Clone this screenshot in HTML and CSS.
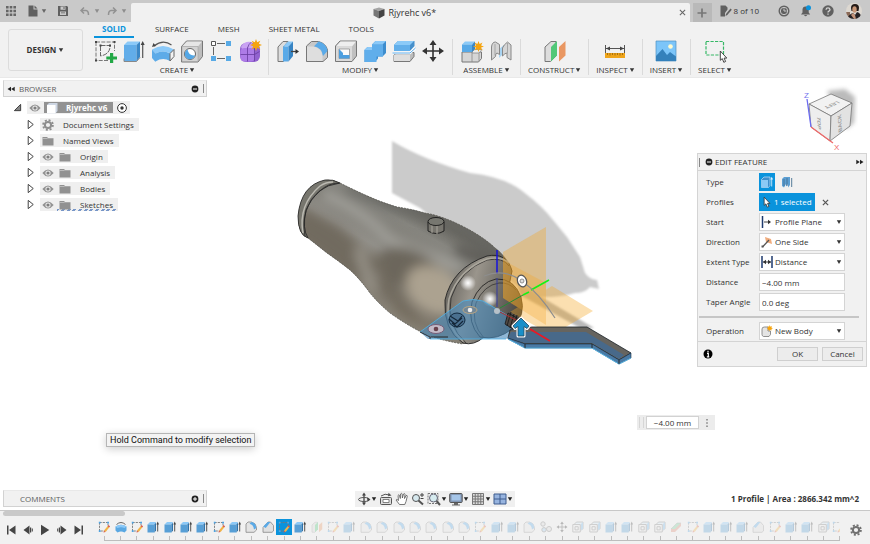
FILE: index.html
```html
<!DOCTYPE html>
<html lang="en">
<head>
<meta charset="utf-8">
<title>Rjyrehc v6*</title>
<link rel="stylesheet" href="styles.css">
</head>
<body>
<svg class="defs" aria-hidden="true">
  <symbol id="caret" viewBox="0 0 6 6"><path d="M.8 1.2h4.4L3 5z" fill="currentColor"/></symbol>
  <symbol id="apps" viewBox="0 0 12 12"><path d="M1 1h2.600v2.600H1zM4.700 1h2.600v2.600H4.700zM8.400 1H11v2.600H8.400zM1 4.700h2.600v2.600H1zM4.700 4.700h2.600v2.600H4.700zM8.400 4.700H11v2.600H8.400zM1 8.400h2.600V11H1zM4.700 8.400h2.600V11H4.700zM8.400 8.400H11V11H8.400z" fill="#666"/></symbol>
  <symbol id="file" viewBox="0 0 12 12"><path d="M1.500.5h5v4h4V11.500h-9z" fill="#606060"/><path d="M7.500.5l3 3h-3z" fill="#606060"/></symbol>
  <symbol id="save" viewBox="0 0 12 12"><path d="M1 1h9l1 1v9H1z" fill="#606060"/><path d="M3.500 1.500h5v3.200h-5zM3 6.500h6V10H3z" fill="#c9c9c9"/><path d="M6.500 2h1v2h-1zM4 7.500h4v.8H4z" fill="#606060"/></symbol>
  <symbol id="undo" viewBox="0 0 12 12"><path d="M5 2.500L2 5.500l3 3M2.300 5.500H7q2.500.2 2.500 4.500" fill="none" stroke="#929292" stroke-width="1.500"/></symbol>
  <symbol id="cubegray" viewBox="0 0 12 12"><path d="M.5 2L6 .5l5.500 1.500L6 4z" fill="#a5a5a5"/><path d="M.5 2L6 4v7.500l-5.500-3z" fill="#777"/><path d="M6 4l5.500-2v6.500L6 11.500z" fill="#444"/></symbol>
  <symbol id="job" viewBox="0 0 12 12"><path d="M.5.5h5l2 2v2L5 8v3.500H.500z" fill="#606060"/><path d="M6 9l4.500-5.500 1.300 1.200L7.300 10 5.500 11z" fill="#606060"/></symbol>
  <symbol id="clock" viewBox="0 0 12 12"><circle cx="6" cy="6" r="5.500" fill="#606060"/><circle cx="6" cy="6" r="3.700" fill="none" stroke="#c9c9c9"/><path d="M6 3.500V6h2.500" fill="none" stroke="#c9c9c9"/></symbol>
  <symbol id="bell" viewBox="0 0 12 12"><path d="M1 9.500l1.500-2V4.500Q2.700 1.500 5.500 1.500T8.700 4.500v3l1.500 2zM4 10h3.200Q5.600 12.500 4 10z" fill="#606060"/><circle cx="8.500" cy="2.800" r="2.500" fill="#0a93dc"/></symbol>
  <symbol id="help" viewBox="0 0 12 12"><circle cx="6" cy="6" r="5.700" fill="#606060"/><path d="M4 4.700Q4.200 2.800 6 2.800T8 4.500Q8 5.500 6.900 6.100 6 6.500 6 7.500M6 8.500v1.300" fill="none" stroke="#d5d5d5" stroke-width="1.300"/></symbol>

  <symbol id="sketch" viewBox="0 0 24 24"><path d="M3 3h18.500v9M3 3v18.500h12" fill="none" stroke="#777" stroke-dasharray="4 1.300"/><path d="M7.500 6.500h9.500v2q-1 7-9.500 8.500z" fill="none" stroke="#666" stroke-dasharray="5 1"/><path d="M2 2h2v2H2zM20.500 2h2v2h-2zM2 20.500h2v2H2zM16 5.500h2v2h-2zM6.500 5.500h2v2h-2z" fill="#444"/><path d="M17 14h3.200v3.400H24v3h-3.800V24H17v-3.600h-3.700v-3H17z" fill="#22a846"/></symbol>
  <symbol id="extrude" viewBox="0 0 24 24"><path d="M2 6l3.500-3.500H18L14.500 6z" fill="#8bc9f8"/><path d="M2 6h12.500v16.500H2z" fill="#62ade9"/><path d="M14.500 6L18 2.500V18l-3.500 4.500z" fill="#3b87c6"/><path d="M2 19.500V22.500h12.500L18 18.500" fill="none" stroke="#888"/><path d="M20.700 19V5" stroke="#555" stroke-width="1.200"/><path d="M20.700 2l2 4h-4z" fill="#444"/></symbol>
  <symbol id="revolve" viewBox="0 0 24 24"><path d="M3 7Q12 0 20.500 6" fill="none" stroke="#555" stroke-width="1.200"/><path d="M1 8l1.500-4 2.500 3z" fill="#444"/><path d="M1 10.500q11-7 22 0l-3.500 4q-7.500-4-15 0z" fill="#8bc9f8"/><path d="M1 10.500l3.500 4v8.500L1 19zM4.500 14.500q7.500-4 14.500 0v7.500q-7-4-14.500.5z" fill="#5dabe8"/><path d="M19 14.500l4-4v7l-4 4.500z" fill="#f3f3f3" stroke="#666"/></symbol>
  <symbol id="hole" viewBox="0 0 24 24"><path d="M1.500 7.500l5-5.500h16v15.500l-4.500 5.500H1.500z" fill="#bdbdbd" stroke="#777"/><path d="M2 7.500l5-5h15l-4 5z" fill="#e6e6e6"/><path d="M2 7.500h16v15H2z" fill="#d3d3d3" stroke="#999" stroke-width=".5"/><circle cx="10" cy="15" r="5.500" fill="#fff" stroke="#666"/><path d="M7.500 10.500a5.200 5.200 0 1 0 7.500 5.800q-6 1-7.500-5.800z" fill="#53a7e6"/></symbol>
  <symbol id="pattern" viewBox="0 0 24 24"><path d="M8 4.500h8M4.500 8v8M8 19.500h8" stroke="#666"/><path d="M2.500 2.500h4v4h-4z" fill="#fff" stroke="#555"/><path d="M17 2h5v5h-5zM17 17h5v5h-5zM2 17h5v5H2z" fill="#58aae6"/></symbol>
  <symbol id="form" viewBox="0 0 24 24"><rect x="2" y="4" width="20" height="19" rx="6" fill="#9262cf"/><path d="M3 8q3-6 10-5l4 5-3 2H4z" fill="#c9a2f3"/><rect x="2.500" y="9" width="14" height="13.500" rx="4" fill="#ad7be7"/><path d="M9.500 8.500v14M2.500 15.500h14l5-3M16.500 9v13M9.500 9q1-4 4-6" stroke="#673b9e" fill="none" stroke-width=".8"/><use href="#star" x="12" y="0" width="12" height="12"/></symbol>
  <symbol id="star" viewBox="0 0 12 12"><path d="M6 0l1.200 3.200L10.300 1.700 8.800 4.800 12 6 8.800 7.200l1.500 3.100-3.100-1.500L6 12 4.800 8.800 1.700 10.300 3.200 7.200 0 6l3.200-1.200L1.700 1.700l3.100 1.500z" fill="#f5a40f"/></symbol>
  <symbol id="press" viewBox="0 0 24 24"><path d="M2 8l5-5.500h5L7.500 8v14.500H2z" fill="#ddd" stroke="#777"/><path d="M7 7.500l5-5h5l-4.500 5z" fill="#8bc9f8"/><path d="M7 7.500h5.500v15H7z" fill="#5aaae8"/><path d="M12.500 7.500l4.500-5v14.500l-4.500 5.500z" fill="#3684c4"/><path d="M15 12.500h5" stroke="#444" stroke-width="1.300"/><path d="M19.500 10l3.500 2.500-3.500 2.500z" fill="#333"/></symbol>
  <symbol id="fillet" viewBox="0 0 24 24"><path d="M1.500 7l5-4.500h7q7.500 2 9 8.500v7.500L18 22.500H1.500z" fill="#c8c8c8" stroke="#777"/><path d="M2 7.500h5.500q9 .5 10 9.500v5H2z" fill="#dedede"/><path d="M9 7.300l4.500-4.800q8 2 9 9.500l-4.500 5q-1-8-9-9.700z" fill="#5aaae8"/></symbol>
  <symbol id="shell" viewBox="0 0 24 24"><path d="M1.500 7l4.500-5h16.500v15L18 22.500H1.500z" fill="#c0c0c0" stroke="#777"/><path d="M2 7.500l4.500-5H22l-4 5z" fill="#eee"/><path d="M2 7.500h16v14.500H2z" fill="#dadada"/><path d="M5 10h10.500v9.500H5z" fill="#fafafa" stroke="#888" stroke-width=".7"/><path d="M5 10l4 4v2h6.500v3.500H5z" fill="#4d9fdf"/></symbol>
  <symbol id="combine" viewBox="0 0 24 24"><path d="M1.500 11l3-3h4.500V5.500l3.500-3.500H23v12l-3.500 3.500H15v2l-3 3.500H1.500z" fill="#3d8dce"/><path d="M1.500 11l3-3h4.500V5.500h11v12h-6.500v5.500h-12z" fill="#60aeeb"/><path d="M9 5.500L12.500 2H23l-3.500 3.500zM1.500 11l3-3H9v3z" fill="#8bc9f8"/></symbol>
  <symbol id="split" viewBox="0 0 24 24"><path d="M2 6l4-4h16.500v5L18 12H2z" fill="#458fcb"/><path d="M2 6h16v6H2z" fill="#62afea"/><path d="M2 6l4-4h16l-4 4z" fill="#8bcaf8"/><path d="M2 16l3-2.500h17v4L18 22.500H2z" fill="#bcbcbc" stroke="#777"/><path d="M2 16h16v6H2z" fill="#dedede"/><path d="M.5 14h17.500l5.500-5" fill="none" stroke="#fff" stroke-width="2.600"/><path d="M.5 14h17.500l5.500-5" fill="none" stroke="#5aaae8" stroke-width="1"/></symbol>
  <symbol id="move" viewBox="0 0 24 24"><path d="M12 4v16M4 12h16" stroke="#333" stroke-width="1.600"/><path d="M12 1l3.500 5h-7zM12 23l3.500-5h-7zM1 12l5-3.500v7zM23 12l-5-3.500v7z" fill="#333"/></symbol>
  <symbol id="assemble" viewBox="0 0 24 24"><path d="M2 13h19.500v6.500L18.500 23H2z" fill="#d6d6d6" stroke="#777"/><path d="M12 13l2.500-2.500h7.500L19 14h-7zM12 13v10M19 14v8" fill="#eee" stroke="#888" stroke-width=".8"/><path d="M2 5.500l3-3h10L12 5.500z" fill="#8bcaf8"/><path d="M2 5.500h10V13H2z" fill="#57a9e7"/><path d="M12 5.500l3-3V10l-3 3z" fill="#3b87c6"/><use href="#star" x="13" y="2" width="11" height="11"/></symbol>
  <symbol id="joint" viewBox="0 0 24 24"><path d="M10 10l5-4v8l-5 5z" fill="#a9d4f2"/><path d="M2.500 8q.5-5 4-5l4 2.500v10L8 14q-1.500 0-1.500 3.500L2.500 21z" fill="#d5d5d5" stroke="#888"/><path d="M6 5v11.500" stroke="#999" stroke-width=".8"/><path d="M13.500 9q1-3 5-6l3.500 3v15l-4-2.500V14q-2 0-4.500 3z" fill="#d5d5d5" stroke="#888"/><path d="M18.500 4v10" stroke="#999" stroke-width=".8"/></symbol>
  <symbol id="plane" viewBox="0 0 24 24"><path d="M2 8l6-5.500h5V17l-5.500 5.500H2z" fill="#ddd" stroke="#777"/><path d="M8 8l6-6v14.500l-6 6z" fill="#50c878"/><path d="M16 8l6.500-6v14.500l-6.500 6z" fill="#e99762"/></symbol>
  <symbol id="measure" viewBox="0 0 24 24"><path d="M2.500 6v8M21.500 6v8M3 9.500h18" stroke="#555"/><path d="M3 9.500l4-2v4zM21 9.500l-4-2v4z" fill="#444"/><path d="M2 14h20v5H2z" fill="#efa51b"/><path d="M4.500 14v2M7 14v2.500M9.500 14v2M12 14v2.500M14.500 14v2M17 14v2.500M19.500 14v2" stroke="#93610a" stroke-width=".8"/></symbol>
  <symbol id="image" viewBox="0 0 24 24"><path d="M2 2h20v20H2z" fill="#7cc5f9" stroke="#4d8fc0" stroke-width=".7"/><path d="M2 17l6.500-7 4.500 6 3-3 6 4.500V22H2z" fill="#3481bb"/><circle cx="16.500" cy="7.500" r="2.300" fill="#fffbd0"/></symbol>
  <symbol id="select" viewBox="0 0 24 24"><path d="M3 2.500h17.500V16H3z" fill="none" stroke="#36b866" stroke-width="1.200" stroke-dasharray="3.200 1.300"/><use href="#pointer" x="16" y="11" width="9" height="13"/></symbol>
  <symbol id="pointer" viewBox="0 0 9 13"><path d="M1.300 1v9.300l2-1.700 1.500 3.700 1.800-.8-1.500-3.400h2.700z" fill="#fff" stroke="#333" stroke-width=".9"/></symbol>

  <symbol id="t-sketch" viewBox="0 0 12 12"><path d="M1.500 1.500h8.500v3M1.500 1.500v8.500h5" fill="none" stroke="#777" stroke-width=".9" stroke-dasharray="2.200 1"/><path d="M.8.8h1.800v1.800H.8zM9.200.8H11v1.800H9.200zM.8 9.200h1.800V11H.800z" fill="#4ea5e5"/><path d="M6 9.500L9.800 5l1.500 1.300L7.700 11z" fill="#f2b345"/><path d="M9.600 5.200l1-1.200 1.500 1.300-1 1.200zM6 9.500L5.500 11.500l2-.5z" fill="#d8574b"/></symbol>
  <symbol id="t-revolve" viewBox="0 0 12 12"><path d="M1.500 3.500Q6-.5 10.500 3.500" fill="none" stroke="#666"/><path d="M.5 5.500q5.500-3.500 11 0v4L9.500 11.500q-3.500-2-7 0L.5 9.500z" fill="#5aa8e2"/><path d="M.5 5.500q5.500-3.500 11 0l-2 1.500q-3.500-1.500-7 0z" fill="#8bc9f8"/></symbol>
  <symbol id="t-extrude" viewBox="0 0 12 12"><path d="M.5 3.500L3 1h6L7.500 3.500z" fill="#8bc9f8"/><path d="M.5 3.500h7v8h-7z" fill="#579fd6"/><path d="M7.500 3.500L9 1.500V9.500l-1.500 2z" fill="#2f75ad"/><path d="M10.700 10.500V2.500" stroke="#555"/><path d="M10.700.5L12 3.500H9.400z" fill="#444"/></symbol>
  <symbol id="t-selected" viewBox="0 0 12 12"><path d="M.5 3.500L3 1h6v8.500l-1.500 2h-7z" fill="#3e8fcc" stroke="#d9efff" stroke-width=".6"/><path d="M1 4h6v7H1z" fill="#8ccaf6"/><path d="M10.700 10.500V2.500" stroke="#e0f1ff" stroke-width=".8"/><path d="M10.700.8L12 3.500H9.400z" fill="#e0f1ff"/></symbol>
  <symbol id="t-fillet" viewBox="0 0 12 12"><path d="M1 3l2-2h3.500Q11 2 11.500 6.500V9L9 11.300H1z" fill="#e4e4e4" stroke="#888" stroke-width=".8"/><path d="M4.500 2.700L6.500 1q4.500 1 4.800 6L9 8.500q-.5-5-4.500-5.800z" fill="#5aaae8"/></symbol>
  <symbol id="t-chamfer" viewBox="0 0 12 12"><path d="M1 6.500L6 1h2.500l3 3.500V10l-1.500 1.300H1z" fill="#e0e0e0" stroke="#888" stroke-width=".8"/><path d="M1.300 5.500L5.700 1h2.800L3.700 7z" fill="#5aaae8"/></symbol>
  <symbol id="t-combine" viewBox="0 0 12 12"><path d="M2.500 3l2-2h6.500v6.500l-2 2" fill="#d9ecfa" stroke="#777" stroke-width=".9"/><path d="M.8 3.500h7.500V11H.8zM3 5.700h3.200v3.200H3z" fill="#eee" stroke="#777" stroke-width=".9"/><path d="M9 3l2-2v6.500L9 9.500z" fill="#76b9ea"/></symbol>
  <symbol id="t-joint" viewBox="0 0 12 12"><circle cx="3" cy="3" r="2.200" fill="#ddd" stroke="#777"/><circle cx="4" cy="8.800" r="2.200" fill="#a7d3f3" stroke="#777"/><circle cx="9" cy="8" r="2.500" fill="#ddd" stroke="#777"/></symbol>
  <symbol id="t-split" viewBox="0 0 12 12"><path d="M1 8l6-6h4L5 9z" fill="#78cf99" stroke="#777" stroke-width=".5"/><path d="M1 8h4l6-6v3l-6 6H1z" fill="#e08b73"/></symbol>
  <symbol id="gear" viewBox="0 0 12 12"><circle cx="6" cy="6" r="3.100" fill="none" stroke="currentColor" stroke-width="2"/><circle cx="6" cy="6" r="4.900" fill="none" stroke="currentColor" stroke-width="1.800" stroke-dasharray="2 1.850"/></symbol>

  <symbol id="eye" viewBox="0 0 12 12"><path d="M.3 6Q6-1 11.700 6 6 13 .3 6z" fill="#929292"/><circle cx="6" cy="6" r="2.600" fill="#e8e8e8"/><circle cx="6" cy="6" r="1.600" fill="#808080"/></symbol>
  <symbol id="folder" viewBox="0 0 12 12"><path d="M.5 2h5v1.200h6V10.500H.500z" fill="#919191"/><path d="M.5 3.500h5" stroke="#ccc" stroke-width=".7"/></symbol>
  <symbol id="closed" viewBox="0 0 8 12"><path d="M1.500 1.500v9L7 6z" fill="#fff" stroke="#333"/></symbol>
  <symbol id="open" viewBox="0 0 10 10"><path d="M8.500 1.500v7h-7z" fill="#888" stroke="#333"/></symbol>
  <symbol id="minus" viewBox="0 0 8 8"><circle cx="4" cy="4" r="3.400" fill="#222"/><path d="M2 4h4" stroke="#fff"/></symbol>
  <symbol id="plus" viewBox="0 0 8 8"><circle cx="4" cy="4" r="3.400" fill="#222"/><path d="M2 4h4M4 2v4" stroke="#fff"/></symbol>
  <symbol id="rewind" viewBox="0 0 8 6"><path d="M4 .8v4.400L.5 3zM7.700.8v4.400L4.200 3z" fill="#222"/></symbol>
  <symbol id="first" viewBox="0 0 12 12"><path d="M2 1.500h1.500v9H2zM10.500 1.500v9L4 6z" fill="#444"/></symbol>
  <symbol id="prev" viewBox="0 0 12 12"><path d="M7.500 1.500v9L1.500 6z" fill="#444"/><path d="M8 3.500h1.200v5H8zM9.800 4.500h1v3h-1z" fill="#444"/></symbol>
  <symbol id="play" viewBox="0 0 12 12"><path d="M2 .8v10.400L10.300 6z" fill="#444"/></symbol>

  <symbol id="n-orbit" viewBox="0 0 14 14"><path d="M7 2v10" stroke="#444" stroke-width="1.300"/><path d="M7 .5l2 3H5zM7 13.500l2-3H5z" fill="#444"/><ellipse cx="7" cy="7.500" rx="5.500" ry="2" fill="none" stroke="#555"/><path d="M10 5.500l3.500 2-3 2z" fill="#444"/></symbol>
  <symbol id="n-look" viewBox="0 0 14 14"><rect x="1.500" y="5.500" width="11" height="7" rx="1" fill="#ddd" stroke="#555"/><path d="M4 7.500h6v3H4z" fill="#fff" stroke="#666" stroke-width=".8"/><path d="M2 4q4-3 8.500-1" fill="none" stroke="#555"/><path d="M9.500.8l3 2.700-3.500.8z" fill="#555"/></symbol>
  <symbol id="n-hand" viewBox="0 0 14 14"><path d="M4.500 12.500L1 8q.5-1.500 2.500.5L3 3.500q1-1.500 1.500 0l.8 3L5.500 2q1-1.500 1.600 0l.3 4L8.500 2q1.300-1 1.500.3L9.500 6.500l1.600-3q1.200-.5 1.200.7L11 9.500l-1.200 3z" fill="#fff" stroke="#555" stroke-width=".8"/></symbol>
  <symbol id="n-zoom" viewBox="0 0 14 14"><circle cx="5" cy="6" r="3.500" fill="#d6e8ee" stroke="#555"/><path d="M7.500 8.500L12 12.500" stroke="#555" stroke-width="2"/><path d="M11 1v4M9 3h4M9.500 6.500h3" stroke="#444"/></symbol>
  <symbol id="n-window" viewBox="0 0 14 14"><path d="M1 1.500h10v10H1z" fill="none" stroke="#777" stroke-dasharray="2 1"/><circle cx="6.500" cy="6" r="4" fill="#d6ebef" stroke="#667"/><path d="M9.500 9l3.500 4" stroke="#555" stroke-width="2"/></symbol>
  <symbol id="n-display" viewBox="0 0 14 14"><rect x=".7" y="1.500" width="12.500" height="9" rx="1" fill="#8196b3" stroke="#555"/><path d="M2.500 3h9v5.500h-9z" fill="#a5c5e8"/><path d="M5 11h4v1.500h2v1H3v-1h2z" fill="#666"/></symbol>
  <symbol id="n-grid" viewBox="0 0 14 14"><path d="M1.500 1.500h11v11h-11zM4.250 1.500v11M7 1.500v11M9.750 1.500v11M1.500 4.250h11M1.500 7h11M1.500 9.750h11" fill="#ddd" stroke="#777"/></symbol>
  <symbol id="n-views" viewBox="0 0 14 14"><path d="M1 2h12v10H1z" fill="#97b4df" stroke="#3e5c8e"/><path d="M7 2v10M1 7h12" stroke="#3e5c8e"/></symbol>
  <symbol id="s-start" viewBox="0 0 12 12"><path d="M1.500 0v12" stroke="#1e3a6d" stroke-width="1.500"/><path d="M3 6h6" stroke="#444"/><path d="M7 3.800L10 6 7 8.200z" fill="#333"/></symbol>
  <symbol id="s-side" viewBox="0 0 12 12"><path d="M4 1l6 2 1 5-6-2z" fill="#f0ac7d"/><path d="M1.500 11L8 4" stroke="#555" stroke-width="1.200"/><path d="M.5 9.500h2v2h-2z" fill="#555"/></symbol>
  <symbol id="s-dist" viewBox="0 0 12 12"><path d="M1 0v12M11 0v12" stroke="#1e3a6d" stroke-width="1.500"/><path d="M2 6h8" stroke="#333"/><path d="M2 6l3-2.200v4.400zM10 6L7 3.800v4.400z" fill="#333"/></symbol>
  <symbol id="s-body" viewBox="0 0 12 12"><path d="M1 4q0-2 2.500-2H7v4h2.500v3.500L8 11.500H2.500Q1 11 1 9.500z" fill="#e4e4e4" stroke="#777" stroke-width=".8"/><use href="#star" x="5.500" y="0" width="6.500" height="6.500"/></symbol>
</svg>

<header class="titlebar">
  <div class="quick">
    <button aria-label="Data panel"><svg><use href="#apps"/></svg></button>
    <button aria-label="File"><svg><use href="#file"/></svg><svg class="caret"><use href="#caret"/></svg></button>
    <button aria-label="Save"><svg><use href="#save"/></svg></button>
    <button class="dim" aria-label="Undo"><svg><use href="#undo"/></svg><svg class="caret"><use href="#caret"/></svg></button>
    <button class="dim" aria-label="Redo"><svg class="flip"><use href="#undo"/></svg><svg class="caret"><use href="#caret"/></svg></button>
  </div>
  <div class="doc-tab">
    <span class="doc-name"><svg><use href="#cubegray"/></svg>Rjyrehc v6*</span>
    <button class="close" aria-label="Close document"><svg viewBox="0 0 8 8"><path d="M1 1l6 6M7 1L1 7" stroke="#666" stroke-width="1.200"/></svg></button>
  </div>
  <button class="new-tab" aria-label="New design"><svg viewBox="0 0 10 10"><path d="M5 .5v9M.5 5h9" stroke="#777" stroke-width="1.700"/></svg></button>
  <div class="account">
    <button class="jobs"><svg><use href="#job"/></svg>8 of 10</button>
    <button aria-label="Job status"><svg><use href="#clock"/></svg></button>
    <button aria-label="Notifications"><svg><use href="#bell"/></svg></button>
    <button aria-label="Help"><svg><use href="#help"/></svg></button>
    <button aria-label="Profile"><svg class="avatar" viewBox="0 0 16 16"><clipPath id="round"><circle cx="8" cy="8" r="8"/></clipPath><g clip-path="url(#round)"><path d="M0 0h16v16H0z" fill="#ddd8d1"/><path d="M0 9h4v7H0z" fill="#8a6a58"/><path d="M5 5q0-4 4-4t4 4l-.5 3H5.500z" fill="#251b18"/><ellipse cx="8.500" cy="6.500" rx="2.200" ry="3.200" fill="#c89777"/><path d="M1 16q2-5 6-6l2 2 2-3q4 1 5 7z" fill="#242124"/><path d="M5 12l3 4h2l-1-4-2-2z" fill="#c4947a"/></g></svg></button>
  </div>
</header>

<section class="ribbon">
  <button class="workspace">DESIGN<svg class="caret"><use href="#caret"/></svg></button>
  <div class="ribbon-main">
    <nav class="tabs">
      <a class="active" href="#solid">SOLID</a><a href="#surface">SURFACE</a><a href="#mesh">MESH</a><a href="#sheet">SHEET METAL</a><a href="#tools">TOOLS</a>
    </nav>
    <div class="groups">
      <div class="group">
        <div class="tools"><button aria-label="Create Sketch"><svg><use href="#sketch"/></svg></button><button aria-label="Extrude"><svg><use href="#extrude"/></svg></button><button aria-label="Revolve"><svg><use href="#revolve"/></svg></button><button aria-label="Hole"><svg><use href="#hole"/></svg></button><button aria-label="Pattern"><svg><use href="#pattern"/></svg></button><button aria-label="Create Form"><svg><use href="#form"/></svg></button></div>
        <button class="menu">CREATE<svg class="caret"><use href="#caret"/></svg></button>
      </div>
      <div class="group">
        <div class="tools"><button aria-label="Press Pull"><svg><use href="#press"/></svg></button><button aria-label="Fillet"><svg><use href="#fillet"/></svg></button><button aria-label="Shell"><svg><use href="#shell"/></svg></button><button aria-label="Combine"><svg><use href="#combine"/></svg></button><button aria-label="Split Body"><svg><use href="#split"/></svg></button><button aria-label="Move"><svg><use href="#move"/></svg></button></div>
        <button class="menu">MODIFY<svg class="caret"><use href="#caret"/></svg></button>
      </div>
      <div class="group">
        <div class="tools"><button aria-label="New Component"><svg><use href="#assemble"/></svg></button><button aria-label="Joint"><svg><use href="#joint"/></svg></button></div>
        <button class="menu">ASSEMBLE<svg class="caret"><use href="#caret"/></svg></button>
      </div>
      <div class="group">
        <div class="tools"><button aria-label="Offset Plane"><svg><use href="#plane"/></svg></button></div>
        <button class="menu">CONSTRUCT<svg class="caret"><use href="#caret"/></svg></button>
      </div>
      <div class="group">
        <div class="tools"><button aria-label="Measure"><svg><use href="#measure"/></svg></button></div>
        <button class="menu">INSPECT<svg class="caret"><use href="#caret"/></svg></button>
      </div>
      <div class="group">
        <div class="tools"><button aria-label="Insert Image"><svg><use href="#image"/></svg></button></div>
        <button class="menu">INSERT<svg class="caret"><use href="#caret"/></svg></button>
      </div>
      <div class="group">
        <div class="tools"><button aria-label="Window Selection"><svg><use href="#select"/></svg></button></div>
        <button class="menu">SELECT<svg class="caret"><use href="#caret"/></svg></button>
      </div>
    </div>
  </div>
</section>

<main class="canvas">
  <svg class="scene" viewBox="290 130 350 250" role="img" aria-label="Bottle-shaped body with bracket">
    <defs>
      <linearGradient id="metal" gradientUnits="userSpaceOnUse" x1="410" y1="205" x2="355" y2="300">
        <stop offset="0" stop-color="#66655f"/><stop offset=".16" stop-color="#86857f"/><stop offset=".33" stop-color="#807e77"/><stop offset=".48" stop-color="#92908a"/><stop offset=".75" stop-color="#7f796e"/><stop offset="1" stop-color="#8b867b"/>
      </linearGradient>
      <linearGradient id="dome" gradientUnits="userSpaceOnUse" x1="448" y1="290" x2="522" y2="310">
        <stop offset="0" stop-color="#6d6a64"/><stop offset=".3" stop-color="#9a958c"/><stop offset=".6" stop-color="#76736c"/><stop offset="1" stop-color="#45433f"/>
      </linearGradient>
      <radialGradient id="glow"><stop offset="0" stop-color="#fff"/><stop offset=".35" stop-color="#fff" stop-opacity=".7"/><stop offset="1" stop-color="#fff" stop-opacity="0"/></radialGradient>
      <filter id="soft" x="-50%" y="-50%" width="200%" height="200%"><feGaussianBlur stdDeviation="6"/></filter>
      <filter id="edge"><feGaussianBlur stdDeviation=".8"/></filter>
      <clipPath id="bottle"><path d="M325 180q8-1 15 3 12 6 23 11 17 8 34 13 14 2 28 6 18 3 39 14 16 8 29 19 14 10 19 24l-30 60q-10 14-19 14-25-4-40-11-16-8-33-20-12-10-20-20-10-14-20-23-10-8-23-17l-19-15q-10-3-10-22 3-31 27-36z"/></clipPath>
    </defs>
    <path d="M392 141q32 19 78 32 37 4 56 21 16 12 27 26l14 17 13 20 5 16q5 7 12 7l2 9-9-2q-5 6-15 6-20 6-46 3l-109-88-28-15z" fill="#cbcbcb" filter="url(#edge)"/>
    <path d="M518 286l8 2 68 40-12 1-62-34z" fill="#b9b9b9" filter="url(#edge)"/>
    <g clip-path="url(#bottle)">
      <path d="M290 170h240v180H290z" fill="url(#metal)"/>
      <g filter="url(#soft)">
        <path d="M300 205l40 22 40 36-14 24-70-50z" fill="#716a5e"/>
        <path d="M322 194q42 18 68 46l72 28" fill="none" stroke="#a5a49f" stroke-width="9"/>
        <path d="M345 188q40 18 76 25l45 17 30 24" fill="none" stroke="#686863" stroke-width="8"/>
        <path d="M358 248l14 42" stroke="#9d998f" stroke-width="8"/>
        <ellipse cx="413" cy="272" rx="38" ry="21" transform="rotate(28 413 272)" fill="#6c665b"/>
        <path d="M382 262l6 30 30 28" fill="none" stroke="#6e675c" stroke-width="10"/>
        <ellipse cx="434" cy="290" rx="30" ry="22" transform="rotate(32 434 290)" fill="#aca290"/>
        <path d="M395 307q20 18 56 25" fill="none" stroke="#786f61" stroke-width="7"/>
        <path d="M455 250l35 10 10 15" fill="none" stroke="#5e5d59" stroke-width="14"/>
      </g>
    </g>
    <path d="M340 183q12 6 23 11 17 8 34 13 14 2 28 6 18 3 39 14 16 8 29 19M308 238q9 7 19 15 13 9 23 17 10 9 20 23 8 10 20 20 17 12 33 20 15 7 40 11" fill="none" stroke="#55544e" stroke-width=".8" stroke-dasharray="2 1"/>
    <path d="M308 238q-10-3-10-22 3-31 27-36 8-1 15 3-25 3-34 27-4 19 2 28z" fill="#77766e" stroke="#222" stroke-width=".8"/>
    <path d="M303 233q-5-28 17-47 6-4 13-4" fill="none" stroke="#bbb9b1" stroke-width="1.500"/>
    <path d="M305 236q-5-28 15-45 8-8 19-8" fill="none" stroke="#252525" stroke-width=".8"/>
    <path d="M463 343q-20-13-18-43 7-32 42-44 20-4 25 15-7 45-28 66-10 9-21 6z" fill="url(#dome)" stroke="#222" stroke-width=".9"/>
    <path d="M466 343q-20-18-15-45 9-28 36-38 16-3 22 6" fill="none" stroke="#2c2b29" stroke-width=".8"/>
    <path d="M463 341q-19-16-14-42 9-29 38-40 14-3 22 4" fill="none" stroke="#aaa69c" stroke-width="1.500"/>
    <circle cx="468" cy="283" r="8" fill="url(#glow)"/>
    <path d="M480 337q-13-14-8-35 8-20 24-23 18-1 25 18 5 18-8 31-15 13-33 9z" fill="url(#dome)" stroke="#252423" stroke-width=".9"/>
    <path d="M484 338q-14-15-8-35 8-18 23-20 10-1 17 7" fill="none" stroke="#363431" stroke-width=".8"/>
    <circle cx="490" cy="299" r="8" fill="url(#glow)"/>
    <path d="M428 222v9q8 5 16 0v-9z" fill="#77756e" stroke="#181818" stroke-width=".9"/><path d="M432 225v8M437 225v9" stroke="#a9a69c"/><ellipse cx="436" cy="221.500" rx="8" ry="4" fill="#777770" stroke="#181818" stroke-width=".9"/>
    <path d="M503 252l43-25v98l-43-27zM510 312l42-26 41 25-41 24z" fill="#f5a623" fill-opacity=".36"/>
    <path d="M503 260l43 23v42l-43-27z" fill="#f5a623" fill-opacity=".3"/>
    <path d="M420 332l43-31q10-3 20 0l49 28-7 15-17-6-2 1h-78z" fill="#4a8abb" fill-opacity=".62"/>
    <path d="M420 332l43-31q10-3 20 0l27 16M430 339h76" fill="none" stroke="#4eb3e8" stroke-width=".8"/>
    <path d="M508 338l2-8 22-3h55l44 26-12 7-27-16h-67z" fill="#66645f" stroke="#1b2227" stroke-width=".8"/>
    <path d="M508 338l3-6 21 0h54l38 23-5 4-27-16h-67z" fill="#48698a"/>
    <path d="M508 338l17 6h67l27 16 12-7v5l-12 6-27-16h-67l-17-9z" fill="#4a7aa5" stroke="#152b3f" stroke-width=".6"/>
    <path d="M508 339l17 9h67l27 16 12-6" fill="none" stroke="#58bff5" stroke-width=".9"/>
    <path d="M525 344v4M592 344v4M619 360v4M420 332l10 5h18M430 337v2" fill="none" stroke="#202020" stroke-width=".9"/>
    <ellipse cx="436" cy="329" rx="8" ry="4.500" fill="#c3bbc8" stroke="#755e79"/><circle cx="436" cy="329" r="2.300" fill="#68424d"/>
    <ellipse cx="470" cy="310" rx="7" ry="3.500" fill="#728797" stroke="#baa684"/><circle cx="470" cy="310" r="2.300" fill="#eee"/>
    <ellipse cx="457" cy="320" rx="8" ry="7" fill="#4a708f" stroke="#122a40"/><path d="M449 319l6 5 7-6M452 323l5 4 6-6M450 316l8 5 4-5" fill="none" stroke="#142739" stroke-width="1.100"/>
    <path d="M508 313l9 5-4 11-8-5zM511 312l-4 14M514 314l-4 14M517 315l-4 14" fill="#514a44" stroke="#171717" stroke-width=".8"/>
    <path d="M497 250v24" stroke="#1612dd" stroke-width="1.500"/><path d="M497 278v29" stroke="#343aa0" stroke-width="1"/>
    <path d="M500 308l23-13" stroke="#258a36"/><path d="M523 295l6-3M531 290l18-10" stroke="#12f316" stroke-width="1.600"/>
    <path d="M500 312l18 9" stroke="#b12b2b"/><path d="M530 329l20 12" stroke="#ee1623" stroke-width="1.500"/>
    <path d="M484 276q21-8 38 5 18 13 33 37" fill="none" stroke="#8d8d8d" stroke-width="1.200"/>
    <ellipse cx="522" cy="281" rx="4.500" ry="6" transform="rotate(-20 522 281)" fill="#fff" stroke="#555" stroke-width="1.300"/><circle cx="522" cy="281" r="2" fill="#ddd" stroke="#777" stroke-width=".8"/>
    <circle cx="497" cy="311" r="3" fill="#c8ccd0" fill-opacity=".85"/>
    <path d="M521 318l8 8-2 2.500-3-2V336h-6v-9.500l-3 2-2-2.500z" fill="#138cc4" stroke="#fff" stroke-width="3" stroke-linejoin="round"/><path d="M521 318l8 8-2 2.500-3-2V336h-6v-9.500l-3 2-2-2.500z" fill="#198fc9" stroke="#24465a" stroke-width=".8"/>
  </svg>

  <div class="workarea">
    <aside class="browser">
      <div class="bar"><button aria-label="Collapse browser"><svg class="rewind"><use href="#rewind"/></svg></button><h2>BROWSER</h2><button aria-label="Hide browser"><svg><use href="#minus"/></svg></button><i class="grip"></i></div>
      <ul class="tree">
        <li class="root"><svg class="twist"><use href="#open"/></svg><span class="node"><svg><use href="#eye"/></svg><span class="chip"><svg viewBox="0 0 12 12"><path d="M1 3l2-2h8.500v8l-2 2.500H1z" fill="#cdd6e3"/><path d="M1 3h8.500v8.500H1z" fill="#fff"/></svg>Rjyrehc v6</span><svg viewBox="0 0 12 12"><circle cx="6" cy="6" r="4.400" fill="#fff" stroke="#333"/><circle cx="6" cy="6" r="1.700" fill="#333"/></svg></span></li>
        <li><svg class="twist"><use href="#closed"/></svg><span class="node"><svg class="gray"><use href="#gear"/></svg>Document Settings</span></li>
        <li><svg class="twist"><use href="#closed"/></svg><span class="node"><svg><use href="#folder"/></svg>Named Views</span></li>
        <li><svg class="twist"><use href="#closed"/></svg><span class="node"><svg><use href="#eye"/></svg><svg><use href="#folder"/></svg>Origin</span></li>
        <li><svg class="twist"><use href="#closed"/></svg><span class="node"><svg><use href="#eye"/></svg><svg><use href="#folder"/></svg>Analysis</span></li>
        <li><svg class="twist"><use href="#closed"/></svg><span class="node"><svg><use href="#eye"/></svg><svg><use href="#folder"/></svg>Bodies</span></li>
        <li><svg class="twist"><use href="#closed"/></svg><span class="node hatched"><svg><use href="#eye"/></svg><svg><use href="#folder"/></svg>Sketches</span></li>
      </ul>
    </aside>

    <div class="right">
      <svg class="viewcube" viewBox="800 84 68 70" role="img" aria-label="View cube">
        <defs><filter id="cubeshade"><feGaussianBlur stdDeviation="2"/></filter></defs>
        <path d="M828 92l18-2 10 8-1 26-8 6z" fill="#bbb" filter="url(#cubeshade)"/>
        <path d="M810 105l22-10 21 9-21 13z" fill="#f2f2f2" stroke="#777" stroke-width=".8"/><path d="M810 105l22 12-1 25-19-14z" fill="#eee" stroke="#777" stroke-width=".8"/><path d="M832 117l21-13-2 23-20 15z" fill="#e2e2e2" stroke="#777" stroke-width=".8"/>
        <path d="M808 100l4 28" stroke="#6b6bf0" stroke-width="1.300"/><path d="M812 128l22 16" stroke="#f06868" stroke-width="1.300"/>
        <text class="cube-z" x="805" y="99">Z</text><text class="cube-x" x="835" y="151">X</text>
        <text class="cube-face" transform="matrix(-.9 .4 -.8 -.45 838 102)">LEFT</text>
        <text class="cube-face" transform="matrix(.05 1 -.8 -.5 818 117)">TOP</text>
        <text class="cube-face" transform="matrix(-.05 -1 .8 -.5 843 132)">BACK</text>
      </svg>

      <form class="feature">
        <div class="feature-head"><i class="grip"></i><svg><use href="#minus"/></svg><h2>EDIT FEATURE</h2><button type="button" aria-label="Dock panel"><svg class="rewind flip"><use href="#rewind"/></svg></button></div>
        <div class="fields">
          <span>Type</span>
          <div class="cell types"><button type="button" class="on" aria-label="Extrude"><svg><use href="#t-selected"/></svg></button><button type="button" aria-label="Thin Extrude"><svg viewBox="0 0 12 12"><path d="M1 3l2-2h6v8l-2 2.500V8L5 10.500V8l-2 3.500L1 10z" fill="#5c9fd3"/><path d="M3 3v7M6 2v8M10.700 2v9" stroke="#456f91" stroke-width=".9"/></svg></button></div>
          <span>Profiles</span>
          <div class="cell"><button type="button" class="picked"><svg class="pointer"><use href="#pointer"/></svg>1 selected</button><button type="button" class="clear" aria-label="Clear selection"><svg viewBox="0 0 8 8"><path d="M1 1l6 6M7 1L1 7" stroke="#555" stroke-width="1.400"/></svg></button></div>
          <label for="start">Start</label>
          <div class="cell combo"><svg><use href="#s-start"/></svg><select id="start"><option>Profile Plane</option></select><svg class="caret"><use href="#caret"/></svg></div>
          <label for="direction">Direction</label>
          <div class="cell combo"><svg><use href="#s-side"/></svg><select id="direction"><option>One Side</option></select><svg class="caret"><use href="#caret"/></svg></div>
          <label for="extent">Extent Type</label>
          <div class="cell combo"><svg><use href="#s-dist"/></svg><select id="extent"><option>Distance</option></select><svg class="caret"><use href="#caret"/></svg></div>
          <label for="distance">Distance</label>
          <div class="cell"><input id="distance" value="−4.00 mm"></div>
          <label for="taper">Taper Angle</label>
          <div class="cell"><input id="taper" value="0.0 deg"></div>
          <hr>
          <label for="operation">Operation</label>
          <div class="cell combo"><svg><use href="#s-body"/></svg><select id="operation"><option>New Body</option></select><svg class="caret"><use href="#caret"/></svg></div>
        </div>
        <div class="feature-foot"><svg class="info" viewBox="0 0 10 10"><circle cx="5" cy="5" r="4.500"/><path d="M5 1.700v1.500M4 4.300h1.300v3.500M3.800 7.800h2.500" fill="none" stroke="#fff" stroke-width="1.200"/></svg><button type="button">OK</button><button type="button">Cancel</button></div>
      </form>
    </div>
  </div>

  <div class="tooltip" role="tooltip">Hold Command to modify selection</div>
  <div class="dimension"><i></i><input aria-label="Distance" value="−4.00 mm"><button aria-label="More"><svg viewBox="0 0 4 10"><path d="M1 0h2v2H1zM1 4h2v2H1zM1 8h2v2H1z" fill="#888"/></svg></button></div>

  <div class="bottom">
    <div class="bar comments"><h2>COMMENTS</h2><button aria-label="Add comment"><svg><use href="#plus"/></svg></button><i class="grip"></i></div>
    <div class="navbar">
      <button aria-label="Orbit"><svg><use href="#n-orbit"/></svg><svg class="caret"><use href="#caret"/></svg></button><button aria-label="Look At"><svg><use href="#n-look"/></svg></button><button aria-label="Pan"><svg><use href="#n-hand"/></svg></button><button aria-label="Zoom"><svg><use href="#n-zoom"/></svg></button><button aria-label="Fit"><svg><use href="#n-window"/></svg><svg class="caret"><use href="#caret"/></svg></button><button aria-label="Display Settings"><svg><use href="#n-display"/></svg><svg class="caret"><use href="#caret"/></svg></button><button aria-label="Grid"><svg><use href="#n-grid"/></svg><svg class="caret"><use href="#caret"/></svg></button><button aria-label="Viewports"><svg><use href="#n-views"/></svg><svg class="caret"><use href="#caret"/></svg></button>
    </div>
    <output class="status">1 Profile | Area : 2866.342 mm^2</output>
  </div>
</main>

<footer class="timeline">
  <div class="scroll"></div>
  <div class="timeline-row">
    <div class="playback"><button aria-label="First"><svg><use href="#first"/></svg></button><button aria-label="Previous"><svg><use href="#prev"/></svg></button><button aria-label="Play"><svg><use href="#play"/></svg></button><button aria-label="Next"><svg class="flip"><use href="#prev"/></svg></button><button aria-label="Last"><svg class="flip"><use href="#first"/></svg></button></div>
    <ol class="steps">
      <li><svg><use href="#t-sketch"/></svg></li><li><svg><use href="#t-revolve"/></svg></li><li><svg><use href="#t-sketch"/></svg></li><li><svg><use href="#t-extrude"/></svg></li><li><svg><use href="#t-extrude"/></svg></li><li><svg><use href="#t-extrude"/></svg></li><li><svg><use href="#t-extrude"/></svg></li><li><svg><use href="#t-sketch"/></svg></li><li><svg><use href="#t-extrude"/></svg></li><li><svg><use href="#t-fillet"/></svg></li><li><svg><use href="#t-chamfer"/></svg></li><li class="current"><svg><use href="#t-sketch"/></svg></li><li><svg><use href="#t-extrude"/></svg></li>
      <li class="later"><svg><use href="#plane"/></svg></li><li class="later"><svg><use href="#t-sketch"/></svg></li><li class="later"><svg><use href="#t-extrude"/></svg></li><li class="later"><svg><use href="#t-fillet"/></svg></li><li class="later"><svg><use href="#t-fillet"/></svg></li><li class="later"><svg><use href="#t-fillet"/></svg></li><li class="later"><svg><use href="#t-fillet"/></svg></li><li class="later"><svg><use href="#t-fillet"/></svg></li><li class="later"><svg><use href="#t-fillet"/></svg></li><li class="later"><svg><use href="#t-fillet"/></svg></li><li class="later"><svg><use href="#t-sketch"/></svg></li><li class="later"><svg><use href="#t-extrude"/></svg></li><li class="later"><svg><use href="#t-extrude"/></svg></li><li class="later"><svg><use href="#t-fillet"/></svg></li><li class="later"><svg><use href="#t-joint"/></svg></li><li class="later"><svg><use href="#move"/></svg></li><li class="later"><svg><use href="#t-combine"/></svg></li><li class="later"><svg><use href="#t-combine"/></svg></li><li class="later"><svg><use href="#t-extrude"/></svg></li><li class="later"><svg><use href="#t-extrude"/></svg></li><li class="later"><svg><use href="#t-combine"/></svg></li><li class="later"><svg><use href="#t-combine"/></svg></li><li class="later"><svg><use href="#t-split"/></svg></li><li class="later"><svg><use href="#t-sketch"/></svg></li><li class="later"><svg><use href="#t-extrude"/></svg></li><li class="later"><svg><use href="#t-extrude"/></svg></li><li class="later"><svg><use href="#t-extrude"/></svg></li><li class="later"><svg><use href="#t-chamfer"/></svg></li><li class="later"><svg><use href="#t-sketch"/></svg></li><li class="later"><svg><use href="#t-extrude"/></svg></li><li class="later"><svg><use href="#t-extrude"/></svg></li><li class="later"><svg><use href="#t-combine"/></svg></li><li class="later cut"><svg><use href="#t-sketch"/></svg></li>
    </ol>
    <button class="prefs" aria-label="Timeline settings"><svg><use href="#gear"/></svg></button>
  </div>
</footer>
</body>
</html>
```
FILE: styles.css
```css
* { box-sizing: border-box; }
body {
  margin: 0;
  min-height: 100vh;
  display: grid;
  grid-template-columns: minmax(0, 1fr);
  grid-template-rows: auto auto 1fr auto;
  font: 500 8px/12px "Open Sans", "Noto Sans", sans-serif;
  color: #333;
  background: #fff;
}
button, input, select { font: inherit; color: inherit; margin: 0; padding: 0; border: 0; background: none; border-radius: 0; }
button { display: flex; align-items: center; justify-content: center; }
a { color: inherit; text-decoration: none; }
h2 { margin: 0; font: inherit; }
ul, ol { list-style: none; margin: 0; padding: 0; }
svg { display: block; flex: none; width: 12px; height: 12px; }
.defs { position: absolute; width: 0; height: 0; }
svg.caret { width: 6px; height: 6px; }
.flip { transform: scaleX(-1); }

/* Title bar */
.titlebar { display: flex; height: 22px; background: #c9c9c9; }
.quick { display: flex; align-items: center; width: 131px; padding-left: 5px; gap: 10px; color: #666; }
.quick button { gap: 2px; }
.quick .dim { gap: 3px; color: #8c8c8c; }
.quick .dim + .dim { margin-left: -4px; }
.doc-tab { flex: 1; display: flex; align-items: center; margin-top: 3px; padding-right: 4px; background: #f1f1f1; border-radius: 2px 2px 0 0; }
.doc-name { flex: 1; display: flex; justify-content: center; align-items: center; gap: 3px; font-size: 9px; }
.close svg { width: 7px; height: 7px; }
.new-tab { width: 19px; margin: 3px 0 0 3px; background: #b9b9b9; }
.new-tab svg { width: 10px; height: 10px; }
.account { display: flex; align-items: center; gap: 10px; padding: 0 8px; }
.account .jobs { gap: 2px; margin-right: 9px; }
svg.avatar { width: 16px; height: 16px; margin-left: 2px; }

/* Ribbon */
.ribbon { display: flex; height: 56px; background: #f1f1f1; border-bottom: 1px solid #e9e9e9; }
.workspace { width: 75px; height: 42px; margin: 7px 0 0 8px; gap: 2px; border: 1px solid #dcdcdc; border-radius: 3px; font-weight: 700; }
.tabs { display: flex; gap: 13px; margin-left: 11px; }
.tabs a { height: 16px; padding: 1px 8px 0; border-bottom: 2px solid transparent; }
.tabs .active { color: #0a93dc; font-weight: 700; border-color: #0a93dc; }
.groups { display: flex; margin-left: 4px; }
.group { display: flex; flex-direction: column; align-items: center; height: 36px; margin-top: 1px; padding: 0 7px; border-right: 1px solid #dadada; }
.group:first-child { padding: 0 6px; }
.group:last-child { border: 0; }
.tools { display: flex; gap: 5px; }
.tools svg { width: 24px; height: 24px; }
.menu { height: 14px; gap: 1px; flex: none; white-space: nowrap; }

/* Canvas */
.canvas { position: relative; display: flex; flex-direction: column; min-height: 432px; background: #fff; }
.scene { position: absolute; left: calc(50% - 145px); top: 52px; width: 350px; height: 250px; }
.workarea { flex: 1; display: flex; justify-content: space-between; padding: 2px 3px; }
.browser, .right { position: relative; }
.browser { width: 204px; }
.bar { display: flex; align-items: center; height: 17px; padding: 0 1px 0 3px; background: #f1f1f1; border: 1px solid #d2d2d2; border-top-color: #e8e8e8; color: #5c5c5c; }
.bar h2 { flex: 1; padding-left: 4px; }
.bar svg { width: 8px; height: 8px; }
.bar svg.rewind, .feature-head svg.rewind { width: 8px; height: 6px; }
.grip { width: 2px; height: 9px; margin-left: 4px; border-left: 1px solid #888; }
.tree { display: grid; gap: 3px; padding-top: 3px; }
.tree li { display: flex; align-items: center; height: 13px; gap: 5px; padding-left: 23px; }
.tree .root { padding-left: 10px; height: 15px; }
.twist { width: 9px; height: 11px; }
.node { display: flex; align-items: center; gap: 5px; height: 13px; padding: 0 5px 0 2px; background: #efefef; }
.node svg:last-of-type { margin-right: 4px; }
.root .node { gap: 3px; padding-right: 0; }
.root .node > svg:last-child { margin-right: 2px; }
.chip { display: flex; align-items: center; height: 11px; padding: 0 6px 0 2px; gap: 4px; background: #929292; color: #fff; font-weight: 700; }
.gray { color: #8d8d8d; }
.hatched { background: linear-gradient(#efefef, #efefef) 0 0 / 17px 100% no-repeat, repeating-linear-gradient(135deg, #7796c8 0 2px, #efefef 2px 4px) 0 100% / 100% 2px no-repeat, #efefef; }

.right { display: flex; flex-direction: column; align-items: flex-end; width: 170px; padding-top: 3px; }
.viewcube { width: 68px; height: 70px; }
.cube-z, .cube-x { font: 8px "Liberation Sans", sans-serif; fill: #7373ee; }
.cube-x { fill: #f06868; }
.cube-face { font: 700 6px "Liberation Sans", sans-serif; fill: #999; }
.feature { width: 100%; background: #f1f1f1; border: 1px solid #d4d4d4; }
.feature-head { display: flex; align-items: center; height: 17px; padding-right: 2px; border-bottom: 1px solid #d4d4d4; }
.feature-head h2 { flex: 1; padding-left: 2px; }
.feature-head svg { width: 8px; height: 8px; }
.feature-head .grip { margin: 0 4px 0 1px; }
.fields { display: grid; grid-template-columns: 53px 86px; align-items: center; gap: 2px 0; padding: 2px 4px 1px 8px; }
.cell { display: flex; align-items: center; height: 18px; position: relative; }
.types { gap: 4px; }
.types button { width: 16px; height: 18px; }
.types .on, .picked { background: #0a93dc; color: #fff; }
.picked { height: 18px; padding: 0 3px 0 4px; gap: 3px; }
.picked .pointer { width: 8px; height: 12px; }
.clear { margin-left: 7px; }
.clear svg { width: 7px; height: 7px; }
.cell input, .cell select { width: 100%; height: 18px; padding: 0 2px; background: #fff; border: 1px solid #d4d4d4; }
.cell select { appearance: none; padding-left: 15px; }
.combo > svg { position: absolute; left: 2px; pointer-events: none; }
.combo > svg.caret { left: auto; right: 3px; }
.fields hr { grid-column: 1 / -1; height: 2px; width: 160px; margin: 3px 0 2px -7px; border: 0; background: #c6c6c6; }
.feature-foot { display: flex; align-items: center; height: 25px; padding: 0 3px 0 5px; gap: 4px; border-top: 1px solid #d4d4d4; }
.feature-foot button { width: 41px; height: 14px; border: 1px solid #cfcfcf; background: #ececec; }
svg.info { width: 10px; height: 10px; margin-right: auto; }

.tooltip { position: absolute; left: 106px; bottom: 63px; padding: 0 3px; border: 1px solid #b5b5b5; background: #f3f3f3; color: #111; box-shadow: 0 2px 8px #0003; font: 400 9px/12px Roboto, sans-serif; }
.dimension { position: absolute; right: 155px; bottom: 80px; display: flex; align-items: center; height: 15px; width: 78px; background: #ececec; }
.dimension i { width: 5px; height: 11px; margin: 0 2px; border: 1px solid #d6d6d6; border-width: 0 1px; }
.dimension input { width: 53px; height: 13px; text-align: center; border: 1px solid #d2d2d2; background: #fff; }
.dimension button { flex: 1; }
.dimension svg { width: 4px; height: 8px; }

.bottom { position: relative; display: grid; grid-template-columns: 1fr auto 1fr; align-items: center; padding: 0 3px 3px; }
.comments { width: 204px; padding-left: 12px; }
.navbar { display: flex; height: 16px; padding: 0 2px; gap: 2px; background: #f0f0f0; color: #222; }
.navbar svg { width: 14px; height: 14px; }
.navbar svg.caret { width: 6px; height: 6px; }
.status { justify-self: end; padding-right: 8px; font-weight: 700; }

/* Timeline */
.timeline { height: 34px; background: #f1f1f1; border-top: 1px solid #c8c8c8; }
.scroll { width: 14%; height: 5px; margin-left: 3px; background: #c9c9c9; border-radius: 3px; }
.timeline-row { display: flex; align-items: center; height: 28px; padding: 0 8px 0 5px; }
.playback { display: flex; gap: 5px; width: 91px; }
.steps { flex: 1; display: grid; grid-template-columns: repeat(45, 2fr) 1fr; margin-right: 10px; }
.steps li { display: flex; flex-direction: column; align-items: center; min-width: 0; height: 22px; padding-top: 2px; border-bottom: 1px solid #bdbdbd; }
.steps li:first-child { border-image: linear-gradient(90deg, transparent 50%, #bdbdbd 50%) 1; }
.steps li::after { content: ""; width: 1px; height: 4px; margin-top: 3px; background: #bdbdbd; }
.steps .later svg { opacity: .3; }
.steps .current { padding: 0; }
.steps .current svg { width: 16px; height: 16px; padding: 2px; background: #0a93dc; }
.steps .current::after { margin-top: 1px; }
.steps .cut { align-items: flex-start; overflow: hidden; }
.steps .cut::after { align-self: flex-end; }
.prefs { color: #707070; }
```
